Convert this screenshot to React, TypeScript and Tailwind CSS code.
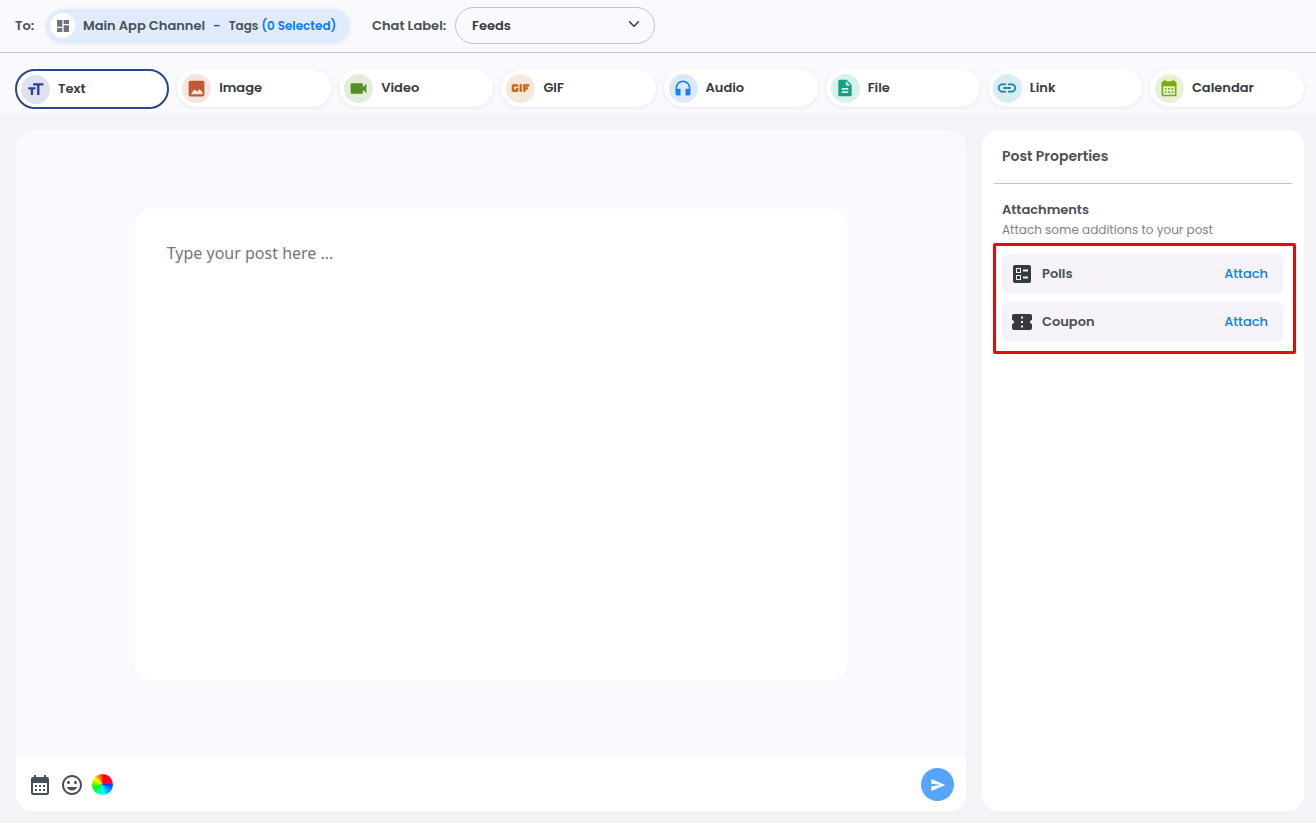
import { useState } from "react";
import {
  MdBallot,
  MdCalendarMonth,
  MdConfirmationNumber,
  MdDashboard,
  MdDescription,
  MdFormatSize,
  MdGif,
  MdHeadphones,
  MdLink,
  MdOutlineInsertEmoticon,
  MdSend,
  MdVideocam,
} from "react-icons/md";
import { ChevronDown } from "lucide-react";

const PictureIcon = ({ size }: { size: number }) => (
  <svg width={size} height={size} viewBox="0 0 24 24" fill="currentColor" aria-hidden="true">
    <path
      fillRule="evenodd"
      d="M5 3h14a2 2 0 0 1 2 2v14a2 2 0 0 1-2 2H5a2 2 0 0 1-2-2V5a2 2 0 0 1 2-2zM5.500 18.500h13.500v-2l-3.500-4-2.500 3-3.500-2.500z"
    />
  </svg>
);

// the first path is the icon's empty bounding box, keep the stroke off it
const GifIcon = ({ size }: { size: number }) => (
  <MdGif size={size} strokeWidth={0} className="[&>path:not([fill=none])]:stroke-current [&>path:not([fill=none])]:[stroke-width:0.5]" />
);

const postTypes = [
  { name: "Text", icon: MdFormatSize, size: 19, color: "bg-[#dfe2ee] text-[#27478f]" },
  { name: "Image", icon: PictureIcon, size: 21, color: "bg-[#f6e5df] text-[#c05a30]" },
  { name: "Video", icon: MdVideocam, size: 21, color: "bg-[#e4ecdc] text-[#568f22]" },
  { name: "GIF", icon: GifIcon, size: 30, color: "bg-[#f5e8dc] text-[#c06a14]" },
  { name: "Audio", icon: MdHeadphones, size: 20, color: "bg-[#dbeafb] text-[#1c80e6]" },
  { name: "File", icon: MdDescription, size: 20, color: "bg-[#d9f1ea] text-[#12a182]" },
  { name: "Link", icon: MdLink, size: 22, color: "bg-[#d9ebf3] text-[#1e88ab]" },
  { name: "Calendar", icon: MdCalendarMonth, size: 20, color: "bg-[#e8f1d8] text-[#78ac0c]" },
];

const attachments = [
  { name: "Polls", icon: MdBallot },
  { name: "Coupon", icon: MdConfirmationNumber },
];

const Header = () => (
  <header className="flex h-[53px] items-center border-b border-[#c1c1cc] bg-[#faf9fe] pb-px pl-[15px] text-[13px] font-semibold text-[#495057]">
    <span className="w-[31px]">To:</span>
    <button
      type="button"
      className="flex h-[34px] w-[304px] shrink-0 items-center rounded-full bg-[#e0ecfd] pl-1 whitespace-nowrap shadow-[0_1px_4px_rgba(0,0,0,0.08)]"
    >
      <span className="flex size-[25px] items-center justify-center rounded-full bg-white text-[#6f7285]">
        <MdDashboard size={16} />
      </span>
      <span className="ml-2">Main App Channel</span>
      <span className="mx-2">-</span>
      <span className="text-xs">
        Tags <span className="text-[#0d7bf2]">(0 Selected)</span>
      </span>
    </button>
    <label htmlFor="chat-label" className="ml-[22px] w-[83px]">
      Chat Label:
    </label>
    <div className="relative">
      <select
        id="chat-label"
        className="h-[37px] w-[200px] appearance-none rounded-full border border-[#c1c1cc] bg-transparent px-4 text-[13px] font-semibold text-[#343a40]"
      >
        <option>Feeds</option>
      </select>
      <ChevronDown size={18} className="pointer-events-none absolute top-2 right-3 text-[#343a40]" />
    </div>
  </header>
);

const PostTypes = () => {
  const [active, setActive] = useState("Text");

  return (
    <nav className="grid h-[60px] shrink-0 grid-cols-8 items-start gap-2 bg-[#faf9fe] pt-4 pr-3 pl-[15px]">
      {postTypes.map(({ name, icon: Icon, size, color }) => (
        <button
          key={name}
          type="button"
          onClick={() => setActive(name)}
          className={`flex items-center gap-2 rounded-full bg-white text-[13px] font-semibold text-[#343a40] ${
            active === name
              ? "h-10 border-2 border-[#27478f] px-1"
              : "h-[38px] px-[5px] shadow-[0_1px_4px_rgba(0,0,0,0.08)]"
          }`}
        >
          <span className={`flex size-[29px] items-center justify-center rounded-full ${color}`}>
            <Icon size={size} />
          </span>
          {name}
        </button>
      ))}
    </nav>
  );
};

const Editor = () => (
  <section className="flex min-w-0 flex-1 flex-col overflow-hidden rounded-2xl bg-[#faf9fe]">
    <div className="grid flex-1 grid-cols-[1fr_6fr_1fr] grid-rows-[1fr_6fr_1fr]">
      <textarea
        aria-label="Post"
        placeholder="Type your post here ..."
        className="col-start-2 row-start-2 resize-none rounded-2xl bg-white p-8 font-['Noto_Sans',sans-serif] text-base text-[#343a40] outline-none placeholder:text-[#757575]"
      />
    </div>
    <div className="flex h-[53px] items-center gap-2 bg-white px-3 text-[#495057]">
      <button type="button" aria-label="Schedule">
        <MdCalendarMonth size={24} />
      </button>
      <button type="button" aria-label="Emoji">
        <MdOutlineInsertEmoticon size={24} />
      </button>
      <button
        type="button"
        aria-label="Colour"
        className="size-[21px] rounded-full bg-[conic-gradient(from_90deg,#0040ff,#0ff_25%,#0f0_45%,#ff0_60%,#f00_78%,#f06)]"
      />
      <button
        type="button"
        aria-label="Send"
        className="ml-auto flex size-[33px] items-center justify-center rounded-full bg-[#57a5fb] text-white"
      >
        <MdSend size={16} />
      </button>
    </div>
  </section>
);

const Properties = () => (
  <aside className="w-1/4 rounded-2xl bg-white text-[13px] text-[#495057]">
    <h2 className="mx-3 border-b border-[#c3c4ca] px-2 pt-4 pb-[17px] text-sm font-semibold">Post Properties</h2>
    <div className="px-5 pt-4">
      <h3 className="leading-5 font-semibold">Attachments</h3>
      <p className="text-xs leading-5 text-[#7d838a]">Attach some additions to your post</p>
    </div>
    <ul className="mt-[3px] mr-2 ml-[11px] flex flex-col gap-2 rounded-xs border-3 border-[#e60a0d] pt-2 pr-[9px] pb-[9px] pl-[6px]">
      {attachments.map(({ name, icon: Icon }) => (
        <li key={name} className="flex h-10 items-center rounded-lg bg-[#f5f3f9] pr-4 pl-2">
          <Icon size={24} className="text-[#343a40]" />
          <span className="ml-2 font-semibold">{name}</span>
          <button type="button" className="ml-auto font-medium text-[#0d7fe8]">
            Attach
          </button>
        </li>
      ))}
    </ul>
  </aside>
);

const App = () => {
  return (
    <div className="flex min-h-screen flex-col bg-[#f4f3f8] font-[Poppins,Inter,sans-serif]">
      <Header />
      <PostTypes />
      <main className="flex flex-1 gap-4 pt-[17px] pr-3 pb-3 pl-4">
        <Editor />
        <Properties />
      </main>
    </div>
  );
};

export default App;
